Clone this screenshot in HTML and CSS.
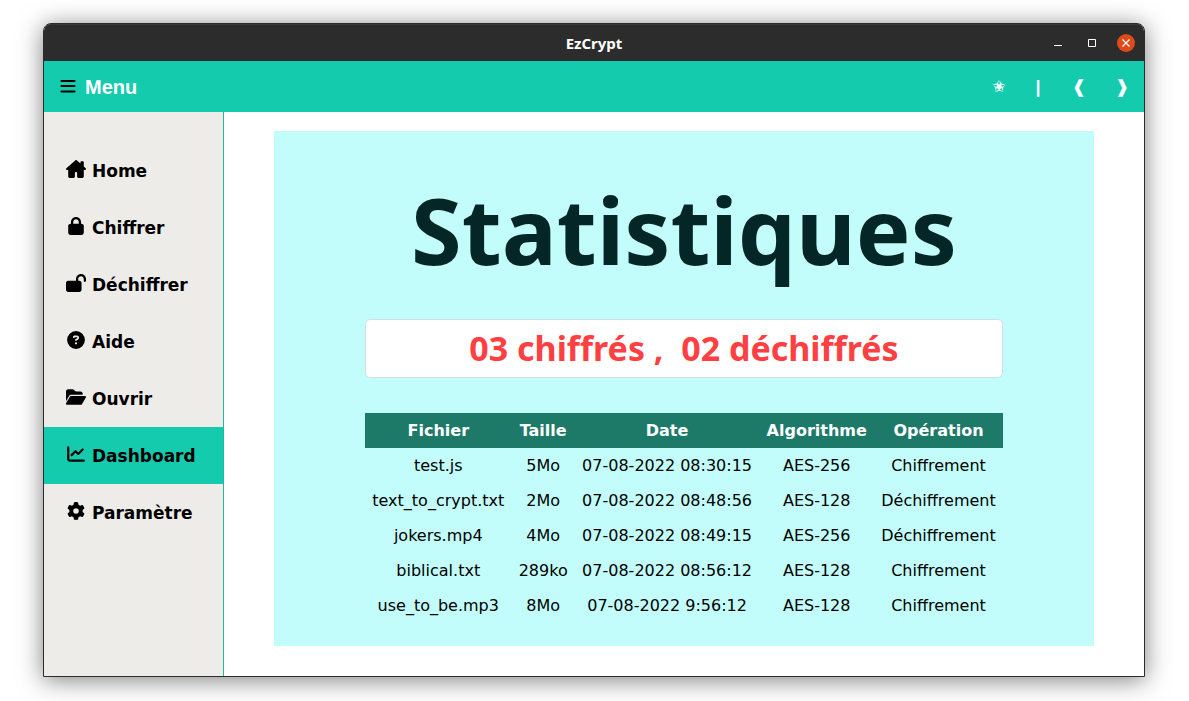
FILE: index.html
```html
<!DOCTYPE html>
<html lang="fr">
<head>
<meta charset="utf-8">
<title>EzCrypt</title>
<link rel="stylesheet" href="styles.css">
</head>
<body>
<div class="window">
  <header class="titlebar">
    <span class="app-name">EzCrypt</span>
    <div class="window-controls">
      <button class="control" type="button" aria-label="Réduire"><svg viewBox="0 0 18 18"><path d="M5 11.500h8" stroke="#fff"/></svg></button>
      <button class="control" type="button" aria-label="Agrandir"><svg viewBox="0 0 18 18"><path d="M5.500 5.500h7v7h-7z" fill="none" stroke="#fff"/></svg></button>
      <button class="control close" type="button" aria-label="Fermer"><svg viewBox="0 0 18 18"><path d="M5.500 5.500l7 7M12.500 5.500l-7 7" stroke="#fff" stroke-width="1.300"/></svg></button>
    </div>
  </header>
  <div class="toolbar">
    <button class="menu" type="button">
      <svg viewBox="0 0 16 16"><path d="M1.500 2h13M1.500 7h13M1.500 12.500h13" stroke="#000" stroke-width="2.200" stroke-linecap="round"/></svg>
      <span>Menu</span>
    </button>
    <div class="actions">
      <button class="action star" type="button">✬</button>
      <span class="action bar">|</span>
      <button class="action" type="button">❰</button>
      <button class="action" type="button">❱</button>
    </div>
  </div>
  <div class="body">
    <nav class="sidebar">
      <a class="item" href="#"><svg viewBox="0 0 576 512"><path d="M575.800 255.500c0 18-15 32.100-32 32.100h-32l.7 160.200c0 2.700-.2 5.400-.5 8.100V472c0 22.100-17.900 40-40 40H360c-22.100 0-40-17.900-40-40V376c0-17.700-14.300-32-32-32h-0c-17.700 0-32 14.300-32 32v96c0 22.100-17.900 40-40 40H104c-22.100 0-40-17.900-40-40V287.600H32c-18 0-32-14-32-32.100c0-9 3-17 10-24L266.400 8c7-7 15-8 22-8s15 2 21 7L416 100V64c0-18 14-32 32-32h32c18 0 32 14 32 32v121l53 46.500c8 7 12 15 10.800 24z"/></svg><span>Home</span></a>
      <a class="item" href="#"><svg viewBox="-64 0 576 512"><path d="M144 144v48H304V144c0-44.200-35.800-80-80-80s-80 35.800-80 80zM80 192V144C80 64.500 144.500 0 224 0s144 64.500 144 144v48h16c35.300 0 64 28.700 64 64V448c0 35.300-28.700 64-64 64H64c-35.300 0-64-28.700-64-64V256c0-35.300 28.700-64 64-64H80z"/></svg><span>Chiffrer</span></a>
      <a class="item" href="#"><svg viewBox="0 0 576 512"><path d="M352 144c0-44.200 35.800-80 80-80s80 35.800 80 80v48c0 17.700 14.300 32 32 32s32-14.300 32-32V144C576 64.500 511.500 0 432 0S288 64.500 288 144v48H64c-35.300 0-64 28.700-64 64V448c0 35.300 28.700 64 64 64H384c35.300 0 64-28.700 64-64V256c0-35.300-28.700-64-64-64H352V144z"/></svg><span>Déchiffrer</span></a>
      <a class="item" href="#"><svg viewBox="-32 0 576 512"><path d="M256 512A256 256 0 1 0 256 0a256 256 0 1 0 0 512zM169.800 165.300c7.900-22.300 29.100-37.300 52.800-37.300h58.300c34.900 0 63.100 28.300 63.100 63.100c0 22.600-12.100 43.500-31.700 54.800L280 264.400c-.2 13-10.900 23.600-24 23.600c-13.300 0-24-10.700-24-24V250.500c0-8.600 4.600-16.500 12.100-20.800l44.300-25.400c4.700-2.700 7.600-7.700 7.600-13.100c0-8.400-6.800-15.100-15.100-15.100H222.600c-3.400 0-6.400 2.100-7.500 5.300l-.4 1.200c-4.400 12.500-18.200 19-30.600 14.600s-19-18.200-14.600-30.600l.4-1.200zM224 352a32 32 0 1 1 64 0 32 32 0 1 1 -64 0z"/></svg><span>Aide</span></a>
      <a class="item" href="#"><svg viewBox="0 0 576 512"><path d="M88.700 223.800L0 375.800V96C0 60.700 28.700 32 64 32H181.500c17 0 33.300 6.700 45.300 18.700l26.500 26.500c12 12 28.300 18.700 45.300 18.700H416c35.300 0 64 28.700 64 64v32H144c-22.800 0-43.800 12.100-55.300 31.800zm27.600 16.100C122.100 230 132.600 224 144 224H544c11.500 0 22 6.100 27.700 16.100s5.700 22.200-.1 32.100l-112 192C453.900 474 443.400 480 432 480H32c-11.500 0-22-6.100-27.700-16.100s-5.700-22.200 .1-32.100l112-192z"/></svg><span>Ouvrir</span></a>
      <a class="item active" href="#" aria-current="page"><svg viewBox="-32 0 576 512"><path d="M64 64c0-17.700-14.300-32-32-32S0 46.300 0 64V400c0 44.200 35.800 80 80 80H480c17.700 0 32-14.300 32-32s-14.300-32-32-32H80c-8.800 0-16-7.200-16-16V64zm406.600 86.600c12.500-12.500 12.500-32.800 0-45.300s-32.800-12.500-45.300 0L320 210.700l-57.400-57.400c-12.500-12.500-32.800-12.500-45.300 0l-112 112c-12.500 12.500-12.500 32.800 0 45.300s32.800 12.500 45.300 0L240 221.300l57.400 57.400c12.500 12.500 32.800 12.500 45.300 0l128-128z"/></svg><span>Dashboard</span></a>
      <a class="item" href="#"><svg viewBox="-32 0 576 512"><path d="M495.900 166.600c3.200 8.700 .5 18.400-6.400 24.600l-43.300 39.400c1.100 8.300 1.700 16.800 1.700 25.400s-.6 17.100-1.700 25.400l43.300 39.400c6.900 6.200 9.600 15.900 6.400 24.600c-4.400 11.900-9.700 23.300-15.800 34.300l-4.700 8.100c-6.600 11-14 21.400-22.100 31.200c-5.900 7.200-15.700 9.600-24.500 6.800l-55.700-17.700c-13.400 10.300-28.200 18.900-44 25.400l-12.500 57.100c-2 9.100-9 16.300-18.200 17.800c-13.800 2.300-28 3.500-42.500 3.500s-28.700-1.200-42.500-3.500c-9.200-1.500-16.200-8.700-18.200-17.800l-12.500-57.100c-15.800-6.500-30.600-15.100-44-25.400L83.100 425.900c-8.800 2.800-18.600 .3-24.500-6.800c-8.100-9.800-15.500-20.200-22.100-31.200l-4.700-8.100c-6.100-11-11.400-22.400-15.800-34.300c-3.200-8.700-.5-18.400 6.400-24.600l43.300-39.400C64.600 273.100 64 264.600 64 256s.6-17.100 1.700-25.400L22.400 191.200c-6.900-6.200-9.600-15.900-6.400-24.600c4.400-11.900 9.700-23.300 15.800-34.300l4.700-8.100c6.600-11 14-21.400 22.100-31.200c5.900-7.200 15.700-9.600 24.500-6.800l55.700 17.700c13.400-10.300 28.200-18.900 44-25.400l12.500-57.100c2-9.100 9-16.300 18.200-17.800C227.300 1.200 241.500 0 256 0s28.700 1.200 42.500 3.500c9.200 1.500 16.200 8.700 18.200 17.800l12.500 57.100c15.800 6.500 30.600 15.100 44 25.400l55.700-17.700c8.800-2.800 18.600-.3 24.500 6.800c8.100 9.800 15.500 20.200 22.100 31.200l4.700 8.100c6.100 11 11.400 22.400 15.800 34.300zM256 336a80 80 0 1 0 0-160 80 80 0 1 0 0 160z"/></svg><span>Paramètre</span></a>
    </nav>
    <main class="content">
      <section class="card">
        <h1 class="title">Statistiques</h1>
        <div class="stats">
          <p class="summary">03 chiffrés ,&nbsp; 02 déchiffrés</p>
          <table class="files">
            <thead><tr><th>Fichier</th><th>Taille</th><th>Date</th><th>Algorithme</th><th>Opération</th></tr></thead>
            <tbody>
              <tr><td>test.js</td><td>5Mo</td><td>07-08-2022 08:30:15</td><td>AES-256</td><td>Chiffrement</td></tr>
              <tr><td>text_to_crypt.txt</td><td>2Mo</td><td>07-08-2022 08:48:56</td><td>AES-128</td><td>Déchiffrement</td></tr>
              <tr><td>jokers.mp4</td><td>4Mo</td><td>07-08-2022 08:49:15</td><td>AES-256</td><td>Déchiffrement</td></tr>
              <tr><td>biblical.txt</td><td>289ko</td><td>07-08-2022 08:56:12</td><td>AES-128</td><td>Chiffrement</td></tr>
              <tr><td>use_to_be.mp3</td><td>8Mo</td><td>07-08-2022 9:56:12</td><td>AES-128</td><td>Chiffrement</td></tr>
            </tbody>
          </table>
        </div>
      </section>
    </main>
  </div>
</div>
</body>
</html>
```
FILE: styles.css
```css
* { box-sizing: border-box; }

body {
  display: flex;
  min-height: 100vh;
  margin: 0;
  padding: 23px 44px 24px 43px;
  background: #fff;
  color: #000;
  font: 16px/19px "DejaVu Sans", sans-serif;
}

button { padding: 0; border: 0; background: none; color: inherit; font: inherit; }

.window {
  display: flex;
  flex: 1;
  flex-direction: column;
  overflow: hidden;
  border: 1px solid #2c2c2c;
  border-radius: 8px 8px 0 0;
  box-shadow: 0 3px 24px rgba(0, 0, 0, 0.5);
}

.titlebar {
  display: grid;
  grid-template-columns: 1fr auto 1fr;
  align-items: center;
  height: 37px;
  padding: 0 9px;
  border-top: 1px solid #383838;
  background: #2c2c2c;
  color: #fff;
  font: bold 15px/20px "Noto Sans", sans-serif;
}

.app-name { grid-column: 2; }

.window-controls { display: flex; justify-content: flex-end; gap: 16px; }

.control { width: 18px; height: 18px; border-radius: 50%; }
.control svg { display: block; width: 18px; height: 18px; }
.close { background: #e04a1a; }

.toolbar {
  display: flex;
  align-items: center;
  justify-content: space-between;
  height: 51px;
  padding: 0 12px 0 16px;
  background: #14cbae;
  color: #fff;
}

.menu {
  display: flex;
  align-items: center;
  gap: 9px;
  font: bold 20px/24px "Liberation Sans", sans-serif;
}
.menu svg { width: 16px; height: 16px; }

.actions { display: flex; align-items: center; gap: 23px; }
.action {
  width: 20px;
  text-align: center;
  font: bold 18px/20px "Liberation Sans", "DejaVu Sans", sans-serif;
}
.star { width: 16px; font-weight: normal; font-size: 16px; }
.bar { width: 16px; }

.body { display: flex; flex: 1; }

.sidebar {
  width: 180px;
  padding-top: 30px;
  border-right: 1px solid #20b8a0;
  background: #edece8;
}

.item {
  display: flex;
  align-items: center;
  gap: 6px;
  height: 57px;
  padding-left: 22px;
  color: #000;
  font-size: 17px;
  font-weight: bold;
  text-decoration: none;
}
.item svg { width: 20px; height: 18px; margin-bottom: 4px; }
.item span { padding-top: 2px; }
.active { background: #14cbae; }

.content { display: flex; flex: 1; padding: 19px 50px 30px; background: #fff; }

.card {
  display: flex;
  flex: 1;
  flex-direction: column;
  align-items: center;
  padding: 44px 16px 23px;
  background: #c2fdfb;
}

.title {
  margin: 0 0 34px;
  color: #042627;
  font: bold 92px/110px "Noto Sans", sans-serif;
}

.stats { min-width: 638px; }

.summary {
  margin: 0 0 35px;
  padding: 8px;
  border: 1px solid #cfdfe8;
  border-radius: 5px;
  background: #fff;
  color: #ff3f42;
  font: bold 34px/41px "Noto Sans", sans-serif;
  text-align: center;
}

.files { width: 100%; border-collapse: collapse; text-align: center; white-space: nowrap; }
.files th, .files td { padding: 8px 7px; }
.files th { background: #1d7a69; color: #fff; }
```
